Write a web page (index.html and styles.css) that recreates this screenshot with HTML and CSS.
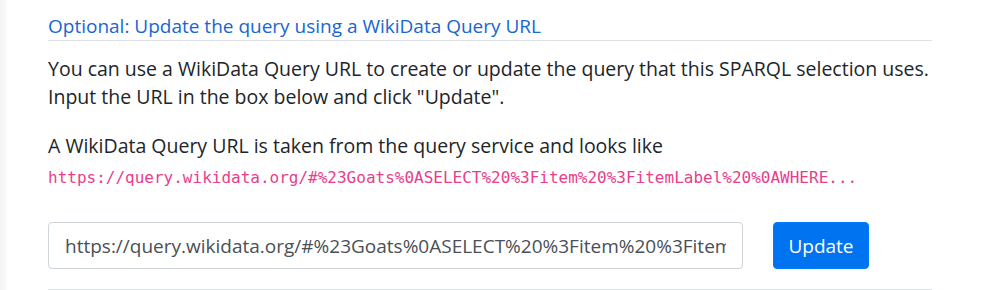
FILE: index.html
```html
<!DOCTYPE html>
<html>
<head>
<meta charset="utf-8">
<link rel="stylesheet" href="styles.css">
</head>
<body>
<div class="page">
  <section class="panel">
    <h5 class="panel-title">Optional: Update the query using a WikiData Query URL</h5>
    <p class="text">You can use a WikiData Query URL to create or update the query that this SPARQL selection uses.<br>Input the URL in the box below and click "Update".</p>
    <p class="text text-example">A WikiData Query URL is taken from the query service and looks like<br><code class="code">https://query.wikidata.org/#%23Goats%0ASELECT%20%3Fitem%20%3FitemLabel%20%0AWHERE...</code></p>
    <div class="form-row">
      <input class="url-input" type="text" value="https://query.wikidata.org/#%23Goats%0ASELECT%20%3Fitem%20%3FitemLabel%20%0AWHERE%20%7B">
      <button class="btn-update" type="button">Update</button>
    </div>
  </section>
</div>
</body>
</html>
```
FILE: styles.css
```css
html, body {
  margin: 0;
  padding: 0;
  background: #fff;
}
body {
  font-family: "Open Sans", "Noto Sans", sans-serif;
  color: #212529;
  height: 290px;
  overflow: hidden;
}
.page {
  height: 290px;
  background: linear-gradient(to right, #f4f4f4 0, #f8f8f8 5px, #fff 8px);
  padding-left: 48px;
  padding-top: 12px;
}
.panel {
  width: 884px;
  border-bottom: 1px solid #dee2e6;
}
.panel-title {
  margin: 0;
  font-size: 19px;
  font-weight: 400;
  line-height: 28px;
  color: #1766d2;
  border-bottom: 1px solid #dee2e6;
}
.text {
  margin: 14px 0 0;
  font-size: 19.5px;
  line-height: 28px;
}
.text-example {
  margin-top: 21px;
}
.code {
  font-family: "DejaVu Sans Mono", "Liberation Mono", monospace;
  font-size: 16px;
  line-height: 20px;
  color: #e83e8c;
  vertical-align: -2px;
}
.form-row {
  display: flex;
  align-items: center;
  margin-top: 34px;
  margin-bottom: 20px;
}
.url-input {
  box-sizing: border-box;
  width: 695px;
  height: 47px;
  padding: 0 16px;
  border: 1px solid #ced4da;
  border-radius: 4px;
  font-family: "Open Sans", "Noto Sans", sans-serif;
  font-size: 19px;
  color: #495057;
  background: #fff;
}
.btn-update {
  box-sizing: border-box;
  margin-left: 30px;
  width: 96px;
  height: 47px;
  border: 1px solid #007bff;
  border-radius: 4px;
  background: #0073f0;
  color: #fff;
  font-family: "Open Sans", "Noto Sans", sans-serif;
  font-size: 19px;
  padding: 0;
}
```
